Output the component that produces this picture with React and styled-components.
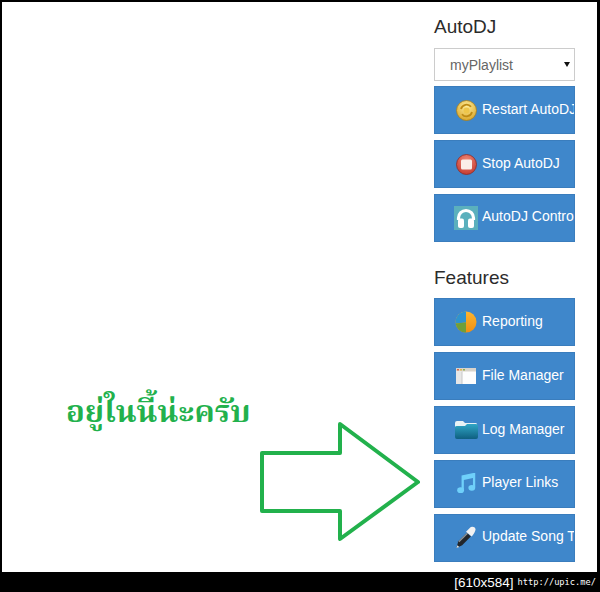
import styled, { createGlobalStyle } from 'styled-components'

const Global = createGlobalStyle`
html, body { margin: 0; padding: 0; background: #000; }
body { font-family: "Liberation Sans", Arial, sans-serif; }
`

const Page = styled.div`
width: 600px;
height: 592px;
display: flex;
flex-direction: column;
background: #000;
overflow: hidden;
`

const Shot = styled.main`
position: relative;
height: 570px;
margin: 2px 3px 0 2px;
background: #fff;
padding-left: 432px;
box-sizing: border-box;
`

const Sidebar = styled.aside`
width: 141px;
display: flex;
flex-direction: column;
`

const Heading = styled.h3`
margin: ${({ $top }) => $top}px 0 ${({ $bottom }) => $bottom}px;
height: 26px;
line-height: 26px;
font-size: 19px;
font-weight: 400;
color: #2b2b2b;
`

const SelectWrap = styled.div`
position: relative;
margin-bottom: 5px;

&::after{
  content: "";
  position: absolute;
  right: 5.500px;
  top: 14px;
  border-left: 3.5px solid transparent;
  border-right: 3.5px solid transparent;
  border-top: 5.5px solid #111;
}
`

const Select = styled.select`
display: block;
width: 100%;
height: 33px;
padding: 0 15px;
appearance: none;
background: #fff;
border: 1px solid #ccc;
border-radius: 0;
font-family: inherit;
font-size: 14px;
color: #666;
`

const Stack = styled.div`
display: flex;
flex-direction: column;
gap: 5.6px;
`

const Button = styled.button`
display: flex;
align-items: center;
gap: ${({ $gap }) => $gap}px;
width: 100%;
height: 48.3px;
padding: 0 0 0 ${({ $pad }) => $pad}px;
box-sizing: border-box;
background: #3f87cb;
border: 1px solid #3a7dbd;
border-radius: 0;
color: #fff;
font-family: inherit;
font-size: 14px;
white-space: nowrap;
overflow: hidden;

svg{
  flex: none;
}

span{
  margin-bottom: 3px;
}
`

const Note = styled.div`
position: absolute;
left: 64px;
top: 388px;
font-family: "Noto Serif Thai", "Noto Sans Thai", "Noto Sans", "DejaVu Serif", serif;
font-size: 31px;
font-weight: 700;
line-height: 48px;
color: #22b14c;
white-space: nowrap;
`

const Arrow = styled.svg`
position: absolute;
left: 256px;
top: 418px;
`

const Watermark = styled.footer`
flex: 1;
display: flex;
justify-content: flex-end;
align-items: center;
gap: 4px;
padding-right: 4px;
color: #fff;
`

const Size = styled.span`
font-family: "Liberation Sans", sans-serif;
font-size: 13.5px;
`

const Url = styled.span`
font-family: "DejaVu Sans Mono", monospace;
font-size: 8.7px;
`

const RestartIcon = () => (
  <svg width="21" height="21" viewBox="0 0 21 21">
    <defs>
      <radialGradient id="gold" cx="50%" cy="30%" r="75%">
        <stop offset="0%" stopColor="#fdeb9a" />
        <stop offset="100%" stopColor="#d8a322" />
      </radialGradient>
    </defs>
    <circle cx="10.5" cy="10.5" r="10" fill="url(#gold)" stroke="#a87f1c" strokeWidth="0.8" />
    <path d="M5 9a5.700 5.700 0 0 1 10-2.200M16 12a5.700 5.700 0 0 1-10 2.200" fill="none" stroke="#bd8a14" strokeWidth="1.800" />
    <circle cx="10.5" cy="10.5" r="3" fill="#eec64a" />
  </svg>
)

const StopIcon = () => (
  <svg width="21" height="21" viewBox="0 0 21 21">
    <defs>
      <radialGradient id="red" cx="50%" cy="30%" r="75%">
        <stop offset="0%" stopColor="#f08a78" />
        <stop offset="100%" stopColor="#c2362c" />
      </radialGradient>
    </defs>
    <circle cx="10.5" cy="10.5" r="10" fill="url(#red)" stroke="#8e2a26" strokeWidth="0.8" />
    <rect x="5" y="5.500" width="11" height="10" rx="1.500" fill="#fbeee8" />
  </svg>
)

const HeadphonesIcon = () => (
  <svg width="24" height="24" viewBox="0 0 24 24">
    <rect width="24" height="24" fill="#5bb0bd" />
    <path d="M4.500 14V12a7.500 7.500 0 0 1 15 0v2" fill="none" stroke="#fff" strokeWidth="3.200" />
    <rect x="4" y="12.500" width="6" height="9.500" rx="2" fill="#fff" />
    <rect x="14" y="12.500" width="6" height="9.500" rx="2" fill="#fff" />
  </svg>
)

const PieIcon = () => (
  <svg width="22" height="22" viewBox="0 0 22 22">
    <defs>
      <linearGradient id="pieOrange" x1="0" y1="0" x2="0" y2="1">
        <stop offset="0%" stopColor="#fdb52e" />
        <stop offset="100%" stopColor="#ef8f12" />
      </linearGradient>
    </defs>
    <circle cx="11" cy="11" r="10.5" fill="url(#pieOrange)" />
    <path d="M11 11.500 L11 .5 A10.5 10.5 0 0 0 .6 12.500 Z" fill="#2f93cf" />
    <path d="M11 11.500 L.6 12.500 A10.5 10.5 0 0 0 11 21.5 Z" fill="#6f9f3a" />
  </svg>
)

const WindowIcon = () => (
  <svg width="20" height="16" viewBox="0 0 20 16">
    <rect width="20" height="16" fill="#fdfdfd" />
    <rect width="20" height="3.500" fill="#d9d4cc" />
    <rect x="1" y="1" width="2" height="1.500" fill="#d9694a" />
    <rect x="4" y="1" width="2" height="1.500" fill="#e3b54a" />
    <rect x="7" y="1" width="2" height="1.500" fill="#8fb04f" />
    <rect y="3.500" width="6" height="12.500" fill="#e6e6e6" />
    <path d="M6 3.500v12.500" stroke="#c8c8c8" />
  </svg>
)

const FolderIcon = () => (
  <svg width="23" height="18" viewBox="0 0 23 18">
    <defs>
      <linearGradient id="folder" x1="0" y1="0" x2="0" y2="1">
        <stop offset="0%" stopColor="#30a6c6" />
        <stop offset="100%" stopColor="#0f5f80" />
      </linearGradient>
    </defs>
    <path d="M0 2 Q0 0 2 0 H8 L10 2 H21 Q22 2 22 4 V8 H0 Z" fill="#e8f2f5" />
    <path d="M0 6 Q0 5 2 5 H10 L12 3 H21 Q23 3 23 5 V16 Q23 18 21 18 H2 Q0 18 0 16 Z" fill="url(#folder)" />
  </svg>
)

const NoteIcon = () => (
  <svg width="19" height="21" viewBox="0 0 20 22">
    <path d="M6 17.5V3.5L18 1V15" fill="none" stroke="#6fd0fa" strokeWidth="2.4" />
    <path d="M6 3.5 18 1V5L6 7.5Z" fill="#6fd0fa" />
    <ellipse cx="3.8" cy="18" rx="3.6" ry="3" fill="#6fd0fa" />
    <ellipse cx="15.6" cy="15.5" rx="3.6" ry="3" fill="#6fd0fa" />
  </svg>
)

const DropperIcon = () => (
  <svg width="22" height="23" viewBox="0 0 22 24">
    <path d="M1 23 L3 16 L12 7 L16 11 L7 20 Z" fill="#22262b" />
    <path d="M3 16 L12 7 L13 8 L4 17 Z" fill="#8a949c" />
    <path d="M11 6 L16 1 Q20 0 21 3 Q21 6 17 11 Z" fill="#f2f2f2" />
    <path d="M1 23 L2 20 L4 22 Z" fill="#dfe5ea" />
  </svg>
)

const djButtons = [
  { label: 'Restart AutoDJ', Icon: RestartIcon, pad: 21, gap: 5 },
  { label: 'Stop AutoDJ', Icon: StopIcon, pad: 21, gap: 5 },
  { label: 'AutoDJ Control', Icon: HeadphonesIcon, pad: 19, gap: 4 },
]

const featureButtons = [
  { label: 'Reporting', Icon: PieIcon, pad: 20, gap: 5 },
  { label: 'File Manager', Icon: WindowIcon, pad: 21, gap: 6 },
  { label: 'Log Manager', Icon: FolderIcon, pad: 20, gap: 4 },
  { label: 'Player Links', Icon: NoteIcon, pad: 22, gap: 6 },
  { label: 'Update Song Title', Icon: DropperIcon, pad: 20, gap: 5 },
]

const ButtonList = ({ items }) => (
  <Stack>
    {items.map(({ label, Icon, pad, gap }) => (
      <Button key={label} $pad={pad} $gap={gap}>
        <Icon />
        <span>{label}</span>
      </Button>
    ))}
  </Stack>
)

const App = () => {
  return (
    <Page>
      <Global />
      <Shot>
        <Sidebar>
          <Heading $top={12} $bottom={8}>AutoDJ</Heading>
          <SelectWrap>
            <Select defaultValue="myPlaylist">
              <option>myPlaylist</option>
            </Select>
          </SelectWrap>
          <ButtonList items={djButtons} />
          <Heading $top={23} $bottom={7}>Features</Heading>
          <ButtonList items={featureButtons} />
        </Sidebar>

        <Note>อยู่ในนี้น่ะครับ</Note>
        <Arrow width="170" height="130" viewBox="0 0 170 130">
          <path d="M4 33H82V4L160 62 82 119V91H4Z" fill="none" stroke="#22b14c" strokeWidth="4" strokeLinejoin="round" />
        </Arrow>
      </Shot>
      <Watermark>
        <Size>[610x584]</Size>
        <Url>http://upic.me/</Url>
      </Watermark>
    </Page>
  )
}

export default App
